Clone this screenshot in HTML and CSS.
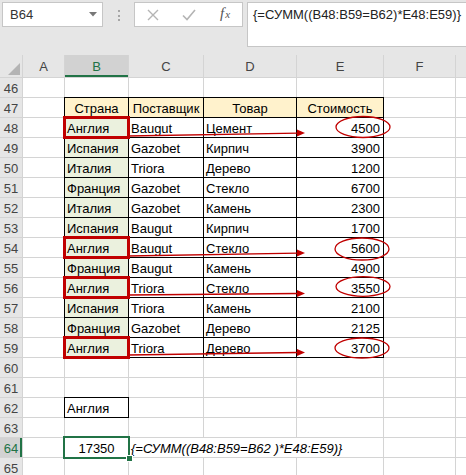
FILE: index.html
```html
<!DOCTYPE html>
<html lang="ru">
<head>
<meta charset="utf-8">
<title>Excel</title>
<link rel="stylesheet" href="styles.css">
</head>
<body>
<div class="page">
  <div class="top">
    <div class="namebox"><span>B64</span><svg width="8" height="5" viewBox="0 0 8 5"><polygon points="0,0 8,0 4,4.5" fill="#777"/></svg></div>
    <div class="dots"><i></i><i></i><i></i></div>
    <div class="btns">
      <span class="ic"><svg width="12" height="12" viewBox="0 0 12 12"><path d="M1 1 L11 11 M11 1 L1 11" stroke="#b4b4b4" stroke-width="1.4" fill="none"/></svg></span>
      <span class="ic"><svg width="14" height="12" viewBox="0 0 14 12"><path d="M1 6.5 L5 10.5 L13 1" stroke="#b4b4b4" stroke-width="1.6" fill="none"/></svg></span>
      <span class="ic fx"><span class="f">f</span><span class="x">x</span></span>
    </div>
    <div class="fbox">{=СУММ((B48:B59=B62)*E48:E59)}</div>
  </div>

  <div class="sheet">
    <div class="corner"><svg width="22" height="22" viewBox="0 0 22 22"><polygon points="20,8 20,20 8,20" fill="#b4b4b4"/></svg></div>
    <div class="ch">A</div><div class="ch selc">B</div><div class="ch">C</div><div class="ch">D</div><div class="ch">E</div><div class="ch">F</div><div class="ch"></div>

    <div class="rh">46</div><div class="c"></div><div class="c"></div><div class="c"></div><div class="c"></div><div class="c"></div><div class="c"></div><div class="c"></div>

    <div class="rh">47</div><div class="c"></div><div class="c t h">Страна</div><div class="c t h">Поставщик</div><div class="c t h">Товар</div><div class="c t h">Стоимость</div><div class="c"></div><div class="c"></div>

    <div class="rh">48</div><div class="c"></div><div class="c t g red">Англия</div><div class="c t">Baugut</div><div class="c t">Цемент</div><div class="c t n">4500</div><div class="c"></div><div class="c"></div>
    <div class="rh">49</div><div class="c"></div><div class="c t g">Испания</div><div class="c t">Gazobet</div><div class="c t">Кирпич</div><div class="c t n">3900</div><div class="c"></div><div class="c"></div>
    <div class="rh">50</div><div class="c"></div><div class="c t g">Италия</div><div class="c t">Triora</div><div class="c t">Дерево</div><div class="c t n">1200</div><div class="c"></div><div class="c"></div>
    <div class="rh">51</div><div class="c"></div><div class="c t g">Франция</div><div class="c t">Gazobet</div><div class="c t">Стекло</div><div class="c t n">6700</div><div class="c"></div><div class="c"></div>
    <div class="rh">52</div><div class="c"></div><div class="c t g">Италия</div><div class="c t">Gazobet</div><div class="c t">Камень</div><div class="c t n">2300</div><div class="c"></div><div class="c"></div>
    <div class="rh">53</div><div class="c"></div><div class="c t g">Испания</div><div class="c t">Baugut</div><div class="c t">Кирпич</div><div class="c t n">1700</div><div class="c"></div><div class="c"></div>
    <div class="rh">54</div><div class="c"></div><div class="c t g red">Англия</div><div class="c t">Baugut</div><div class="c t">Стекло</div><div class="c t n">5600</div><div class="c"></div><div class="c"></div>
    <div class="rh">55</div><div class="c"></div><div class="c t g">Франция</div><div class="c t">Baugut</div><div class="c t">Камень</div><div class="c t n">4900</div><div class="c"></div><div class="c"></div>
    <div class="rh">56</div><div class="c"></div><div class="c t g red">Англия</div><div class="c t">Triora</div><div class="c t">Стекло</div><div class="c t n">3550</div><div class="c"></div><div class="c"></div>
    <div class="rh">57</div><div class="c"></div><div class="c t g">Испания</div><div class="c t">Triora</div><div class="c t">Камень</div><div class="c t n">2100</div><div class="c"></div><div class="c"></div>
    <div class="rh">58</div><div class="c"></div><div class="c t g">Франция</div><div class="c t">Gazobet</div><div class="c t">Дерево</div><div class="c t n">2125</div><div class="c"></div><div class="c"></div>
    <div class="rh">59</div><div class="c"></div><div class="c t g red">Англия</div><div class="c t">Triora</div><div class="c t">Дерево</div><div class="c t n">3700</div><div class="c"></div><div class="c"></div>

    <div class="rh">60</div><div class="c"></div><div class="c"></div><div class="c"></div><div class="c"></div><div class="c"></div><div class="c"></div><div class="c"></div>
    <div class="rh">61</div><div class="c"></div><div class="c"></div><div class="c"></div><div class="c"></div><div class="c"></div><div class="c"></div><div class="c"></div>
    <div class="rh">62</div><div class="c"></div><div class="c t">Англия</div><div class="c"></div><div class="c"></div><div class="c"></div><div class="c"></div><div class="c"></div>
    <div class="rh">63</div><div class="c"></div><div class="c"></div><div class="c"></div><div class="c"></div><div class="c"></div><div class="c"></div><div class="c"></div>
    <div class="rh selr">64</div><div class="c"></div><div class="c ctr sel">17350</div><div class="c it span3">{=СУММ((B48:B59=B62 )*E48:E59)}</div><div class="c"></div><div class="c"></div>
    <div class="rh">65</div><div class="c"></div><div class="c"></div><div class="c"></div><div class="c"></div><div class="c"></div><div class="c"></div><div class="c"></div>
  </div>

  <svg class="overlay" width="466" height="475" viewBox="0 0 466 475">
    <g stroke="#c00000" stroke-width="1.3" fill="none">
      <path d="M128 136 L298 133.2"/>
      <path d="M128 256 L298 253.2"/>
      <path d="M128 295 L298 293.5"/>
      <path d="M128 355 L298 352.5"/>
      <ellipse cx="363" cy="127" rx="27" ry="10.5"/>
      <ellipse cx="362" cy="249" rx="27" ry="11"/>
      <ellipse cx="363" cy="286.5" rx="27" ry="9.8"/>
      <ellipse cx="362" cy="348" rx="27" ry="10"/>
    </g>
    <g fill="#c00000">
      <polygon points="305,133 297,129.5 297,136.5"/>
      <polygon points="305,253 297,249.5 297,256.5"/>
      <polygon points="305,293.5 297,290 297,297"/>
      <polygon points="305,352.5 297,349 297,356"/>
    </g>
  </svg>
</div>
</body>
</html>
```

FILE: styles.css
```css
html, body {
  margin: 0;
  padding: 0;
  background: #fff;
}
body {
  font-family: "Liberation Sans", Arial, sans-serif;
  font-size: 13px;
  color: #000;
}
.page {
  position: relative;
  width: 466px;
  height: 475px;
  overflow: hidden;
}

/* formula bar */
.top {
  height: 55px;
  box-sizing: border-box;
  background: #e6e6e6;
  display: flex;
  align-items: flex-start;
  padding: 2px 0 0 2px;
}
.namebox {
  width: 101px;
  height: 25px;
  box-sizing: border-box;
  border: 1px solid #c6c6c6;
  background: #fff;
  display: flex;
  align-items: center;
  justify-content: space-between;
  padding: 0 5px 0 7px;
  color: #333;
}
.dots {
  width: 31px;
  display: flex;
  flex-direction: column;
  align-items: center;
  gap: 2.5px;
  padding-top: 8px;
}
.dots i {
  display: block;
  width: 2px;
  height: 2px;
  background: #a6a6a6;
}
.btns {
  width: 109px;
  height: 25px;
  box-sizing: border-box;
  border: 1px solid #c6c6c6;
  background: #fff;
  display: grid;
  grid-template-columns: 36px 36px 36px;
  align-items: center;
}
.ic {
  display: flex;
  justify-content: center;
  align-items: center;
  height: 23px;
}
.fx {
  font-family: "Liberation Serif", "Times New Roman", serif;
  font-style: italic;
  color: #555;
  align-items: baseline;
  padding-top: 2px;
  box-sizing: border-box;
}
.fx .f { font-size: 15px; }
.fx .x { font-size: 11px; margin-left: 1px; }
.fbox {
  flex: 1;
  margin-left: 4px;
  height: 45px;
  box-sizing: border-box;
  border: 1px solid #c6c6c6;
  border-right: none;
  background: #fff;
  padding: 2px 0 0 5px;
  line-height: 20px;
  color: #222;
  white-space: nowrap;
}

/* sheet grid */
.sheet {
  display: grid;
  grid-template-columns: 22px 41px 63px 74px 92px 86px 71px 1fr;
  grid-template-rows: 22px;
  grid-auto-rows: 19px;
  gap: 1px;
  background: #d4d4d4;
}
.corner {
  background: #e6e6e6;
  display: flex;
}
.ch {
  background: #e6e6e6;
  color: #444;
  text-align: center;
  line-height: 23px;
}
.selc {
  background: #d2d2d2;
  color: #217346;
  box-shadow: inset 0 -2px 0 #217346;
}
.rh {
  background: #e6e6e6;
  color: #444;
  text-align: center;
  line-height: 21px;
}
.selr {
  background: #d2d2d2;
  color: #217346;
  box-shadow: inset -2px 0 0 #217346;
}
.c {
  background: #fff;
  padding: 0 2px;
  line-height: 21px;
  white-space: nowrap;
  overflow: visible;
}
.t { outline: 1px solid #000; }
.h { background: #fff2cc; text-align: center; }
.g { background: #ebf1de; }
.n { text-align: right; padding-right: 3px; }
.ctr { text-align: center; }
.it { font-style: italic; }
.span3 { grid-column: span 3; }
.red {
  position: relative;
  z-index: 2;
  outline: 3px solid #c00000;
  outline-offset: -1px;
}
.sel {
  position: relative;
  z-index: 3;
  outline: 2px solid #217346;
}
.sel::after {
  content: "";
  position: absolute;
  right: -5px;
  bottom: -5px;
  width: 5px;
  height: 5px;
  background: #217346;
  border: 1px solid #fff;
}
.overlay {
  position: absolute;
  top: 0;
  left: 0;
  z-index: 5;
  pointer-events: none;
}
```
